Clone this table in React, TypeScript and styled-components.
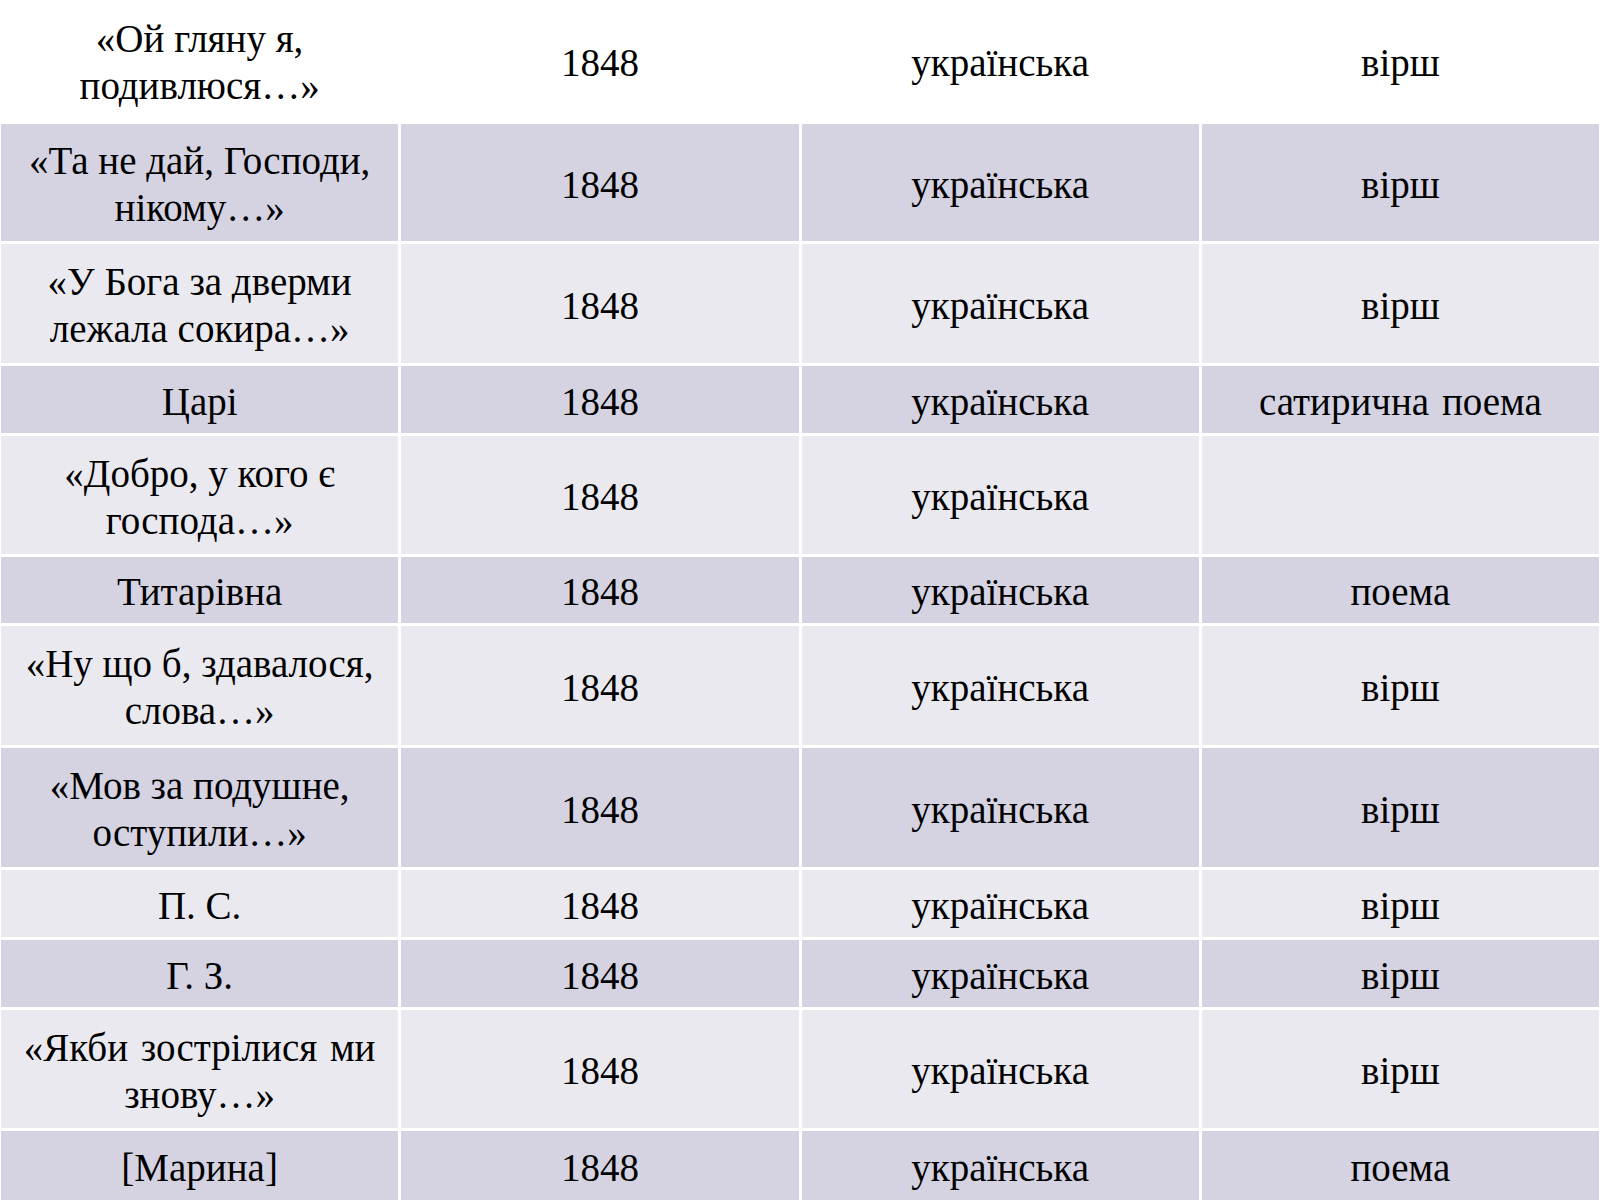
import React from 'react'

import styled, { createGlobalStyle } from 'styled-components'

const GlobalStyle = createGlobalStyle`
  html, body {
    margin: 0;
    padding: 0;
    background: #ffffff;
  }
  body {
    width: 1600px;
    height: 1200px;
    overflow: hidden;
    font-family: "Liberation Serif", "Times New Roman", serif;
  }
`

// Styled components
const Table = styled.div`
  display: grid;
  grid-template-columns: repeat(4, 1fr);
  column-gap: 3px;
  row-gap: 3px;
  width: 1600px;
  padding: 0 1px;
  box-sizing: border-box;
  background: #ffffff;
`

type Tone = 'blank' | 'dark' | 'light'

const toneColor: Record<Tone, string> = {
  blank: '#ffffff',
  dark: '#d5d3e2',
  light: '#ebe9f0',
}

const Cell = styled.div<{ $tone: Tone; $height: number }>`
  display: flex;
  align-items: center;
  justify-content: center;
  height: ${(p) => p.$height}px;
  background: ${(p) => toneColor[p.$tone]};
  color: #000000;
  font-size: 39px;
  line-height: 47px;
  text-align: center;
  padding-top: 3px;
  box-sizing: border-box;
`

const Words = styled.span<{ $spread?: boolean }>`
  white-space: nowrap;
  word-spacing: ${(p) => (p.$spread ? '3px' : 'normal')};
`

type Row = {
  title: string[]
  year: string
  lang: string
  genre: string
  height: number
  spread?: boolean
}

const rows: Row[] = [
  { title: ['«Ой гляну я,', 'подивлюся…»'], year: '1848', lang: 'українська', genre: 'вірш', height: 121 },
  { title: ['«Та не дай, Господи,', 'нікому…»'], year: '1848', lang: 'українська', genre: 'вірш', height: 117 },
  { title: ['«У Бога за дверми', 'лежала сокира…»'], year: '1848', lang: 'українська', genre: 'вірш', height: 119 },
  { title: ['Царі'], year: '1848', lang: 'українська', genre: 'сатирична поема', height: 67 },
  { title: ['«Добро, у кого є', 'господа…»'], year: '1848', lang: 'українська', genre: '', height: 118 },
  { title: ['Титарівна'], year: '1848', lang: 'українська', genre: 'поема', height: 66 },
  { title: ['«Ну що б, здавалося,', 'слова…»'], year: '1848', lang: 'українська', genre: 'вірш', height: 119 },
  { title: ['«Мов за подушне,', 'оступили…»'], year: '1848', lang: 'українська', genre: 'вірш', height: 119 },
  { title: ['П. С.'], year: '1848', lang: 'українська', genre: 'вірш', height: 67 },
  { title: ['Г. З.'], year: '1848', lang: 'українська', genre: 'вірш', height: 67 },
  { title: ['«Якби зострілися ми', 'знову…»'], year: '1848', lang: 'українська', genre: 'вірш', height: 118, spread: true },
  { title: ['[Марина]'], year: '1848', lang: 'українська', genre: 'поема', height: 69 },
]

const App: React.FC = () => {
  return (
    <>
      <GlobalStyle />
      <Table>
        {rows.map((row, i) => {
          const tone: Tone = i === 0 ? 'blank' : i % 2 === 1 ? 'dark' : 'light'
          return (
            <React.Fragment key={i}>
              <Cell $tone={tone} $height={row.height}>
                <Words $spread={row.spread}>
                  {row.title.map((line, j) => (
                    <React.Fragment key={j}>
                      {j > 0 && <br />}
                      {line}
                    </React.Fragment>
                  ))}
                </Words>
              </Cell>
              <Cell $tone={tone} $height={row.height}>
                <Words>{row.year}</Words>
              </Cell>
              <Cell $tone={tone} $height={row.height}>
                <Words>{row.lang}</Words>
              </Cell>
              <Cell $tone={tone} $height={row.height}>
                <Words $spread={row.genre === 'сатирична поема'}>{row.genre}</Words>
              </Cell>
            </React.Fragment>
          )
        })}
      </Table>
    </>
  )
}

export default App
